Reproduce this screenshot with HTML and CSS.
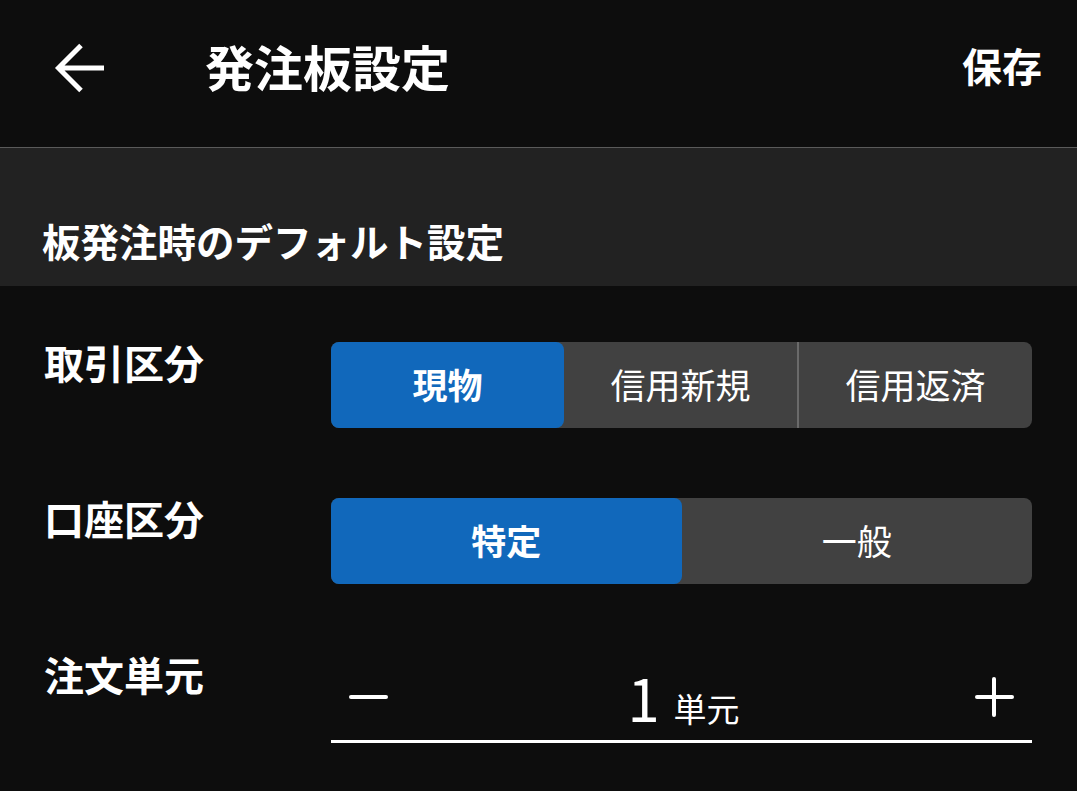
FILE: index.html
```html
<!DOCTYPE html>
<html lang="ja">
<head>
<meta charset="utf-8">
<title>発注板設定</title>
<link rel="stylesheet" href="styles.css">
</head>
<body>
<header class="topbar">
  <button class="back" aria-label="戻る">
    <svg width="52" height="52" viewBox="0 0 52 52"><path d="M52 26H7M29 3.5L6.5 26 29 48.5" fill="none" stroke="#fff" stroke-width="5" stroke-linecap="butt" stroke-linejoin="miter"/></svg>
  </button>
  <h1 class="title">発注板設定</h1>
  <button class="save">保存</button>
</header>
<section class="section-head">板発注時のデフォルト設定</section>
<main class="rows">
  <div class="row">
    <div class="label">取引区分</div>
    <div class="seg seg3">
      <div class="seg-item active">現物</div>
      <div class="seg-item">信用新規</div>
      <div class="seg-item divided">信用返済</div>
    </div>
  </div>
  <div class="row">
    <div class="label">口座区分</div>
    <div class="seg">
      <div class="seg-item active">特定</div>
      <div class="seg-item">一般</div>
    </div>
  </div>
  <div class="row">
    <div class="label">注文単元</div>
    <div class="stepper">
      <span class="step minus"></span>
      <span class="value"><span class="num">1</span><span class="unit">単元</span></span>
      <span class="step plus"></span>
    </div>
  </div>
</main>
</body>
</html>
```
FILE: styles.css
```css
html, body {
  margin: 0;
  padding: 0;
  background: #0d0d0d;
  color: #fff;
  font-family: "Noto Sans CJK JP", "Noto Sans", sans-serif;
}
.topbar {
  height: 130px;
  padding: 0 35px 17px 52px;
  display: flex;
  align-items: center;
  border-bottom: 1px solid #5a5a5a;
}
.back {
  background: none;
  border: 0;
  padding: 0;
  width: 52px;
  height: 52px;
  display: flex;
  margin-top: 5px;
}
.title {
  margin: 0 0 0 101px;
  font-size: 49px;
  font-weight: 700;
  line-height: 1;
  flex: 1;
}
.save {
  background: none;
  border: 0;
  padding: 0;
  color: #fff;
  font-family: inherit;
  font-size: 40px;
  font-weight: 700;
  line-height: 1;
}
.section-head {
  background: #222222;
  height: 39px;
  padding: 73px 0 26px 42px;
  font-size: 38.5px;
  font-weight: 700;
  line-height: 1;
}
.rows {
  padding: 56px 45px 0 44px;
  display: flex;
  flex-direction: column;
  gap: 70px;
}
.row {
  display: flex;
  align-items: flex-start;
}
.label {
  width: 287px;
  font-size: 40px;
  font-weight: 700;
  line-height: 1;
  padding-top: 0;
}
.seg {
  flex: 1;
  height: 86px;
  display: flex;
  background: #414141;
  border-radius: 8px;
}
.seg-item {
  flex: 1;
  display: flex;
  align-items: center;
  justify-content: center;
  font-size: 35px;
  line-height: 1;
  border-radius: 8px;
  padding-bottom: 3px;
}
.seg-item.active {
  background: #1168bb;
  font-weight: 700;
}
.seg-item.divided {
  border-left: 2px solid #6a6a6a;
  border-radius: 0 8px 8px 0;
}
.stepper {
  flex: 1;
  height: 86px;
  border-bottom: 3px solid #fff;
  display: flex;
  align-items: center;
  justify-content: space-between;
  padding: 0 18px;
}
.step {
  position: relative;
  width: 39px;
  height: 40px;
}
.step::before, .plus::after {
  content: "";
  position: absolute;
  background: #fff;
  border-radius: 2px;
}
.step::before {
  left: 0;
  right: 0;
  top: 18px;
  height: 4px;
}
.plus::after {
  top: 0;
  bottom: 0;
  left: 17.5px;
  width: 4px;
}
.value {
  display: flex;
  align-items: baseline;
  margin-top: 0;
  margin-left: 4px;
}
.num {
  font-size: 58px;
  font-weight: 400;
  line-height: 1;
}
.unit {
  font-size: 33px;
  font-weight: 400;
  margin-left: 14px;
  line-height: 1;
}
```
